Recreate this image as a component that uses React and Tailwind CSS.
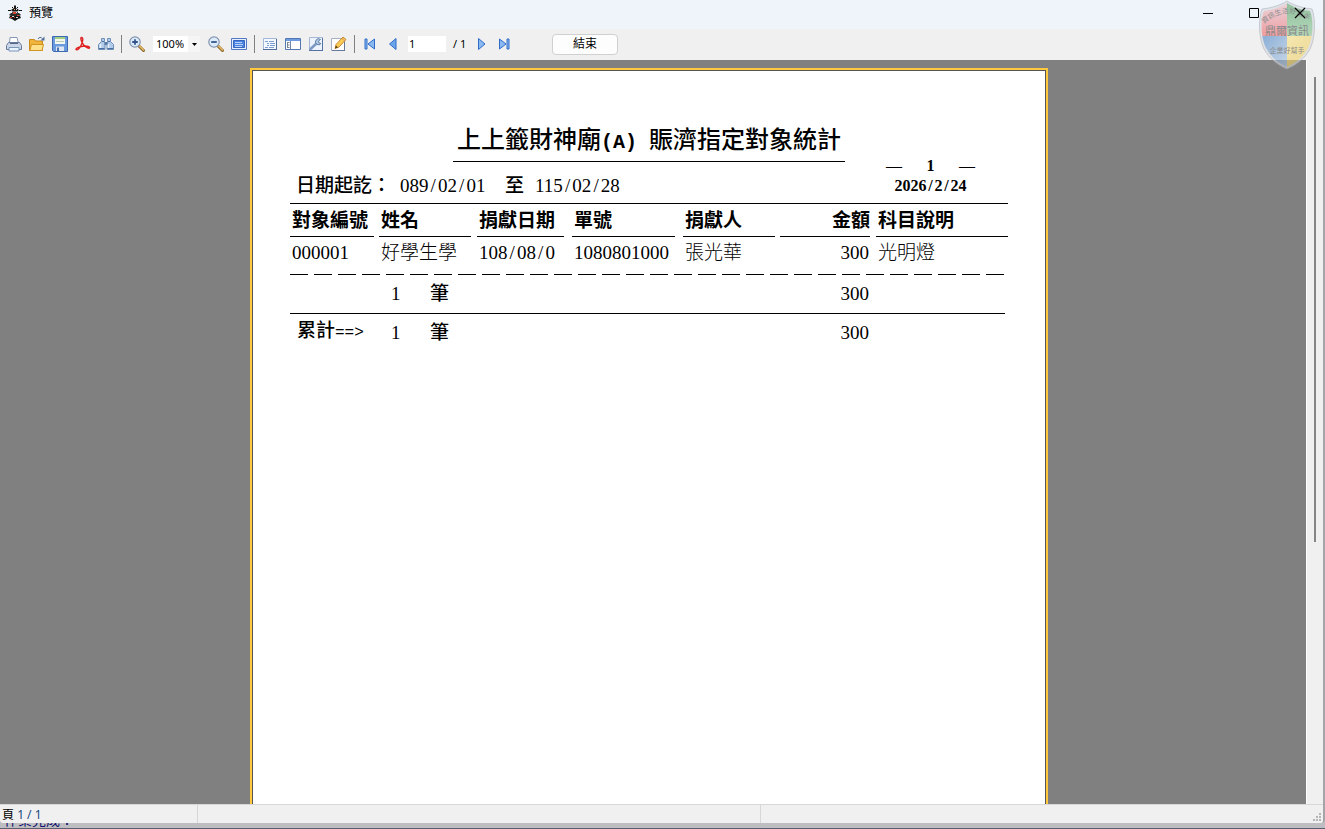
import { Fragment } from "react";

const columns = [
  { title: "對象編號", value: "000001", width: "w-[89px]", line: "mr-[5px]" },
  { title: "姓名", value: "好學生學", width: "w-[98px]", line: "mr-1.5" },
  { title: "捐獻日期", value: "108/08/0", width: "w-[95px]", line: "mr-2" },
  { title: "單號", value: "1080801000", width: "w-[111px]", line: "mr-2" },
  { title: "捐獻人", value: "張光華", width: "w-[97px]", line: "mr-[5px]" },
  { title: "金額", value: "300", width: "w-[96px]", line: "mr-1.5 text-right", right: true },
  { title: "科目說明", value: "光明燈", width: "w-[132px]", line: "" },
];

// slashes take the same width as a digit
function Figures({ text }) {
  return text.split("/").map((part, i) => (
    <Fragment key={i}>
      {i > 0 && <span className="inline-block w-[0.5em] text-center">/</span>}
      {part}
    </Fragment>
  ));
}

function Icon({ children }) {
  return (
    <svg viewBox="0 0 16 16" className="block size-4 shrink-0" aria-hidden="true">
      {children}
    </svg>
  );
}

function Tool({ label, children }) {
  return (
    <button type="button" aria-label={label} className="size-4 shrink-0">
      <Icon>{children}</Icon>
    </button>
  );
}

function Separator() {
  return <div className="h-[18px] w-px shrink-0 bg-[#808080]" />;
}

function Magnifier({ plus }) {
  return (
    <>
      <path d="M10 10l4.5 4.5" stroke="#8a6a30" strokeWidth="3" strokeLinecap="round" />
      <path d="M10.5 10l4 4" stroke="#e8b864" strokeWidth="1.6" strokeLinecap="round" />
      <circle cx="6" cy="6" r="5.2" fill="#dcebfa" stroke="#8294b0" strokeWidth="1.2" />
      <path d={plus ? "M3.2 6h5.6M6 3.2v5.6" : "M3.2 6h5.6"} stroke="#35558e" strokeWidth="1.8" />
    </>
  );
}

function TempleIcon() {
  return (
    <svg viewBox="0 0 16 16" className="size-4 shrink-0" aria-hidden="true">
      <path d="M8 0v4M5 2.500h1M10 2.500h1M1 5.500h3M12 5.500h3" stroke="#111" />
      <path d="M7 1h2v2l3 2-1.500 1.500H5.500L4 5l3-2z" fill="#151515" />
      <path d="M4 8h8l2 2-2 1H4l-2-1z" fill="#2a2a2a" />
      <path d="M3 11h10l1 2-3 1-3 2-3-2-3-1z" fill="#111" />
      <path d="M5 7h6v2H5z" fill="#444" />
      <path d="M6 7h3v2H6zM10 10h2v1h-2z" fill="#d2412c" />
      <path d="M9 4h1v1H9zM5 11h2v1H5zM9 12h2v1H9zM9 7h1v1H9z" fill="#ddd" />
      <path d="M3 12h2v1H3zM7 12h1v1H7z" fill="#c83a28" />
      <path d="M7 4h1v1H7z" fill="#e0a060" />
    </svg>
  );
}

function ShieldLogo() {
  return (
    <svg viewBox="0 0 58 70" className="pointer-events-none absolute top-0 right-[7px] h-[70px] w-[58px] opacity-60" aria-hidden="true">
      <defs>
        <clipPath id="shield">
          <path d="M29 3C23 7 15 10 6 11 2 20 3 38 8 48c5 9 12 15 21 19 9-4 16-10 21-19 5-10 6-28 2-37C43 10 35 7 29 3z" />
        </clipPath>
        <linearGradient id="red" x1="0" y1="0" x2="0" y2="1">
          <stop offset="0" stopColor="#e8c8cb" />
          <stop offset="1" stopColor="#ee6568" />
        </linearGradient>
        <linearGradient id="green" x1="0" y1="0" x2="0" y2="1">
          <stop offset="0" stopColor="#4f9a58" />
          <stop offset="1" stopColor="#8cc691" />
        </linearGradient>
        <linearGradient id="blue" x1="0" y1="0" x2="1" y2="1">
          <stop offset="0" stopColor="#3f7fc4" />
          <stop offset="1" stopColor="#b4cae4" />
        </linearGradient>
        <linearGradient id="yellow" x1="0" y1="0" x2="1" y2="1">
          <stop offset="0" stopColor="#fae384" />
          <stop offset="1" stopColor="#e8c451" />
        </linearGradient>
        <path id="arc" d="M6 24Q29 3 54 23" />
      </defs>
      <path d="M29 1C23 5 14 8 4 9 0 20 1 39 6 49c5 9 13 16 23 20 10-4 18-11 23-20 5-10 6-29 2-40C44 8 35 5 29 1z" fill="#d4d8de" stroke="#a9adb2" />
      <g clipPath="url(#shield)">
        <path d="M0 0h29v36H0z" fill="url(#red)" />
        <path d="M29 0h29v36H29z" fill="url(#green)" />
        <path d="M0 36h29v34H0z" fill="url(#blue)" />
        <path d="M29 36h29v34H29z" fill="url(#yellow)" />
      </g>
      <g className="font-['Noto_Sans_CJK_TC',sans-serif]" fill="#444">
        <text fontSize="7">
          <textPath href="#arc">資訊生活好幫手</textPath>
        </text>
        <text x="29" y="35" fontSize="11" textAnchor="middle">鼎爾資訊</text>
        <text x="29" y="53" fontSize="7" textAnchor="middle">企業好幫手</text>
      </g>
    </svg>
  );
}

function TitleBar() {
  return (
    <header className="flex h-[29px] shrink-0 items-center bg-[#eff4fb] pb-[3px] pl-[7px]">
      <TempleIcon />
      <h1 className="ml-1.5 text-[12px] leading-4">預覽</h1>
      <div className="relative z-10 mr-[17px] ml-auto flex items-center gap-[34px]">
        <button type="button" aria-label="最小化">
          <svg viewBox="0 0 12 12" className="block size-3" stroke="#000" fill="none"><path d="M1 6.500h10" /></svg>
        </button>
        <button type="button" aria-label="最大化">
          <svg viewBox="0 0 12 12" className="block size-3" stroke="#000" fill="none"><path d="M1.500 1.500h9v9h-9z" /></svg>
        </button>
        <button type="button" aria-label="關閉">
          <svg viewBox="0 0 12 12" className="block size-3" stroke="#000" fill="none" strokeWidth="1.200"><path d="M1 1l10 10M11 1L1 11" /></svg>
        </button>
      </div>
    </header>
  );
}

function Toolbar() {
  return (
    <div className="flex h-[31px] shrink-0 items-center gap-[7px] bg-[#f0f0f0] pb-px pl-1.5 text-[11px] leading-4">
      <Tool label="列印">
        <path d="M4 1.500h7l1.500 6h-9z" fill="#fff" stroke="#8597b4" />
        <path d="M2.500 6.500h11l2 3v4h-15v-4z" fill="#cbd6e6" stroke="#66799a" />
        <path d="M3 11.500h10v3.500H3z" fill="#eaf4ff" stroke="#7c96bb" />
        <path d="M4 7.500h8" stroke="#53688a" />
      </Tool>
      <Tool label="開啟">
        <path d="M.5 3.500h5l1 1.500h7v9.500H.5z" fill="#f0b43c" stroke="#c98a1c" />
        <path d="M2.500 8.500h12l-1.500 6H.8z" fill="#ffe08a" stroke="#d0941f" />
        <path d="M9 3c1-2 3-2 4.500-.5" stroke="#52709a" fill="none" />
        <path d="M15.500.5v4h-4z" fill="#52709a" />
      </Tool>
      <Tool label="儲存">
        <path d="M.5.5h15v15h-14l-1-1z" fill="#6a9ade" stroke="#3c69b0" />
        <path d="M3 1h10v7H3z" fill="#f3f8ee" />
        <path d="M3 1h10v2H3z" fill="#a4cf80" />
        <path d="M4 5.500h8" stroke="#bccab8" />
        <path d="M4 10.500h8V15H4z" fill="#dfe7f2" />
        <path d="M5 11.500h2V15H5z" fill="#4872b2" />
      </Tool>
      <Tool label="匯出 PDF">
        <path d="M6.500 1.500c2 0 1.500 4-.5 8-1.500 3-3.500 5-4.700 4.200S3 10.800 8 10.200s7 .8 6.500 1.700-3.800-.3-6-3.200-3.500-7.200-2-7.200z" fill="none" stroke="#df2020" strokeWidth="1.400" />
      </Tool>
      <Tool label="尋找">
        <path d="M3.500 2.500h3v3l.5 2v6H.5v-5l3-3zM9.500 2.500h3v3l3 3v5H9v-6l.5-2z" fill="#b2cbe9" stroke="#6d8fb9" />
        <path d="M6.500 6h3v3h-3z" fill="#587ba8" />
        <path d="M2.500 8v4M10.500 8v4" stroke="#e8f2fc" strokeWidth="1.500" />
        <path d="M1 12.500h5.500M9.500 12.500H15M4 5.500h2M10 5.500h2" stroke="#4a6f9f" />
      </Tool>
      <Separator />
      <Tool label="放大"><Magnifier plus /></Tool>
      <div className="relative mx-px h-4 w-[47px] shrink-0 bg-white">
        <select aria-label="縮放比例" className="block h-4 w-full appearance-none pl-[3px] leading-4 outline-none">
          <option>100%</option>
        </select>
        <div className="pointer-events-none absolute inset-y-0 right-0 flex w-3 items-center justify-center bg-[#f5f5f5]">
          <svg viewBox="0 0 5 3" className="h-[3px] w-[5px]"><path d="M0 0h5L2.500 3z" /></svg>
        </div>
      </div>
      <Tool label="縮小"><Magnifier /></Tool>
      <Tool label="整頁">
        <path d="M.5 2.500h15v11H.5z" fill="#e4efff" stroke="#5479c4" />
        <path d="M2.500 4.500h11v7h-11z" fill="#4c82df" stroke="#3565bd" />
        <path d="M4 6.500h7M4 8.500h8M4 10.500h7" stroke="#b9d3fa" />
      </Tool>
      <Separator />
      <Tool label="大綱">
        <path d="M1.500 2.500h13v11h-13z" fill="#f4f8ff" stroke="#a5b7d6" />
        <path d="M1 13.500h14M14.500 3v11" stroke="#506d9e" />
        <path d="M3 5.500h3M7 5.500h5M5 7.500h2M8 7.500h5M5 9.500h2M8 9.500h5M3 11.500h3M7 11.500h5" stroke="#7d9ccf" />
      </Tool>
      <Tool label="縮圖">
        <path d="M.5 2.500h15v11H.5z" fill="#fff" stroke="#5478b4" />
        <path d="M1 3h14v2H1z" fill="#6e9be0" />
        <path d="M5.500 5v8" stroke="#6e88b0" />
        <path d="M2.500 6.500h2M2.500 9h2M2.500 11.500h2M2.500 6v6" stroke="#7b858f" />
      </Tool>
      <Tool label="頁面設定">
        <path d="M1.500 1.500h13v13h-13z" fill="#edf3fc" stroke="#a5b7d6" />
        <path d="M1 14.500h14M14.500 2v13" stroke="#5470a4" />
        <path d="M2.500 13L9 7" stroke="#7c9ac4" strokeWidth="2.600" strokeLinecap="round" />
        <path d="M12.500 3.500a3 3 0 1 0 .5 4l-2-.5-.5-2z" fill="#b3cbe6" stroke="#617fa9" />
      </Tool>
      <Tool label="編輯">
        <path d="M.5 2.500h13v12H.5z" fill="#fff" stroke="#a5b0c4" />
        <path d="M1 14.500h13M13.500 5v10" stroke="#66799a" />
        <path d="M5 8.500l7-7.500 3 2.500-7 7.500-4 1.500z" fill="#f9cd58" stroke="#c88a2d" />
        <path d="M4 12.500l1-3 2 2z" fill="#57400f" />
        <path d="M11 2.500l2.800 2.400" stroke="#dd8d65" />
      </Tool>
      <Separator />
      <Tool label="第一頁">
        <path d="M3 3h2v10H3zM12.500 3v10L6 8z" fill="#8ab9f2" stroke="#2e6cc8" />
      </Tool>
      <Tool label="上一頁">
        <path d="M11 2.500v11L4.500 8z" fill="#6da5ec" stroke="#2e6cc8" />
      </Tool>
      <input aria-label="頁碼" defaultValue="1" className="h-4 w-[38px] shrink-0 bg-white pl-px outline-none" />
      <span className="w-3.5 shrink-0 whitespace-nowrap">/ 1</span>
      <Tool label="下一頁">
        <path d="M4.500 2.500v11L11 8z" fill="#8ab9f2" stroke="#2e6cc8" />
      </Tool>
      <Tool label="最後一頁">
        <path d="M10 3h2v10h-2zM2.500 3v10L9 8z" fill="#8ab9f2" stroke="#2e6cc8" />
      </Tool>
      <button type="button" className="ml-8 h-[21px] w-[66px] shrink-0 rounded border border-[#d0d0d0] bg-[#fdfdfd] text-[12px]">
        結束
      </button>
    </div>
  );
}

function Report() {
  return (
    <article className="w-[798px] shrink-0 border-2 border-b-0 border-[#ffc83d] bg-white font-['Liberation_Serif','Noto_Sans_CJK_TC',serif] text-[19px] leading-5">
      <div className="min-h-full border border-b-0 border-[#555] px-[37px] pt-[51px]">
        <h2 className="mx-auto w-[392px] border-b border-black text-center text-2xl leading-9 font-medium whitespace-nowrap">
          上上籤財神廟<span className="font-['Liberation_Mono',monospace] text-[20px] font-bold whitespace-pre">(A) </span>賑濟指定對象統計
        </h2>
        <div className="-mt-1.5 mb-[7px] flex items-end pr-[33px] pl-1.5">
          <p className="flex">
            <span className="w-[104px] font-medium">日期起訖：</span>
            <span className="w-[105px]"><Figures text="089/02/01" /></span>
            <span className="w-[30px] font-medium">至</span>
            <Figures text="115/02/28" />
          </p>
          <div className="ml-auto w-[89px] text-base leading-5">
            <p className="flex justify-between"><span>—</span><span className="font-bold">1</span><span>—</span></p>
            <p className="text-center font-bold"><Figures text="2026/2/24" /></p>
          </div>
        </div>
        <table className="w-full table-fixed border-t border-black">
          <thead>
            <tr>
              {columns.map((c) => (
                <th key={c.title} className={`${c.width} p-0 text-left font-bold`}>
                  <div className={`border-b border-black pt-[7px] pb-[5px] pl-0.5 whitespace-nowrap ${c.line}`}>{c.title}</div>
                </th>
              ))}
            </tr>
          </thead>
          <tbody>
            <tr className="h-[37px]">
              {columns.map((c) => (
                <td key={c.title} className={`pb-1.5 pl-0.5 font-light whitespace-nowrap ${c.right ? "pr-[7px] text-right" : ""}`}>
                  <Figures text={c.value} />
                </td>
              ))}
            </tr>
            <tr>
              <td colSpan={7} className="p-0">
                <div className="mr-1 h-px bg-[repeating-linear-gradient(90deg,#000_0_18px,transparent_18px_24px)]" />
              </td>
            </tr>
            <tr className="h-[38px]">
              <td />
              <td className="pl-3"><span className="inline-block w-[39px]">1</span><span className="font-medium">筆</span></td>
              <td colSpan={3} />
              <td className="pr-[7px] text-right">300</td>
              <td />
            </tr>
            <tr>
              <td colSpan={7} className="p-0"><div className="mr-[3px] h-px bg-black" /></td>
            </tr>
            <tr className="h-[38px]">
              <td className="pl-[7px] font-medium whitespace-nowrap">
                累計<span className="font-['Liberation_Mono',monospace] text-base">==&gt;</span>
              </td>
              <td className="pl-3"><span className="inline-block w-[39px]">1</span><span className="font-medium">筆</span></td>
              <td colSpan={3} />
              <td className="pr-[7px] text-right">300</td>
              <td />
            </tr>
          </tbody>
        </table>
      </div>
    </article>
  );
}

function StatusBar() {
  return (
    <footer className="flex h-[19px] shrink-0 border-t border-[#d7d7d7] bg-[#f0f0f0] text-[12px] leading-[19px]">
      <div className="w-[15%] border-r border-[#d7d7d7] pl-0.5 whitespace-nowrap">
        頁 <span className="text-[#1a4a80]">1 / 1</span>
      </div>
      <div className="grow border-r border-[#d7d7d7]" />
      <div className="flex w-[562px] items-end justify-end p-0.5">
        <svg viewBox="0 0 8 8" className="size-2" fill="#b5b5b5" aria-hidden="true">
          <path d="M6 0h2v2H6zM3 3h2v2H3zM6 3h2v2H6zM0 6h2v2H0zM3 6h2v2H3zM6 6h2v2H6z" />
        </svg>
      </div>
    </footer>
  );
}

export default function App() {
  return (
    <div className="flex h-screen flex-col overflow-hidden bg-[#bebec2] font-['Noto_Sans','Noto_Sans_CJK_TC',sans-serif] text-black">
      <div className="relative flex min-h-0 grow flex-col overflow-hidden rounded-b border-r-2 border-[#a5a5a8] bg-[#f0f0f0]">
        <TitleBar />
        <Toolbar />
        <div className="flex min-h-0 grow">
          <main className="flex grow justify-center overflow-hidden bg-[#808080] pt-2 pr-2">
            <Report />
          </main>
          <div className="flex w-[17px] shrink-0 justify-center border-l border-white bg-[#f0f0f0] pt-[17px]">
            <div className="h-[64%] w-0.5 bg-[#858585]" />
          </div>
        </div>
        <StatusBar />
        <ShieldLogo />
      </div>
      <div className="flex h-1.5 shrink-0 items-end overflow-hidden border-b border-[#596170] pl-1 text-[14px] leading-4 text-[#10106a]">
        作業完成：
      </div>
    </div>
  );
}
